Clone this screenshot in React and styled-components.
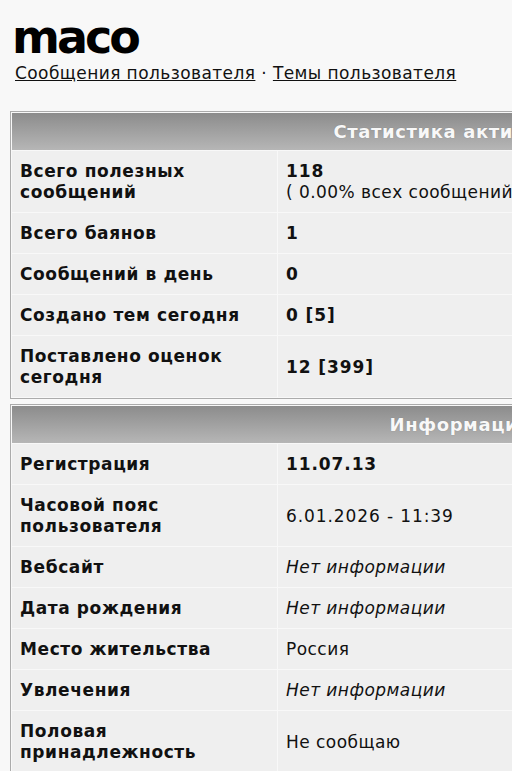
import React from "react";
import styled, { createGlobalStyle } from "styled-components";

const Global = createGlobalStyle`
  html, body {
    margin: 0;
    padding: 0;
    overflow: hidden;
    background: #f8f8f8;
  }
  body {
    font-family: "DejaVu Sans", Verdana, sans-serif;
    color: #111;
  }
`;

const Page = styled.div`
  width: 900px;
  padding: 14px 10px 0 10px;
`;

const Title = styled.h1`
  margin: 0 0 2px 2px;
  font-size: 46px;
  line-height: 46px;
  font-weight: bold;
  letter-spacing: -3px;
  color: #000;
`;

const Links = styled.div`
  margin: 0 0 27px 5px;
  font-size: 17px;
  line-height: 22px;
  letter-spacing: 0.42px;
  color: #111;
`;

const Link = styled.a`
  color: #111;
  text-decoration: underline;
`;

const Table = styled.table`
  width: 900px;
  table-layout: fixed;
  border-collapse: separate;
  border-spacing: 1px;
  border: 1px solid #ababab;
  background: #f8f8f8;
  margin-bottom: 5px;
`;

const HeadCell = styled.th`
  height: 37px;
  padding: 0;
  background: linear-gradient(to bottom, #8c8c8c, #b6b6b6);
  color: #f8f8f8;
  font-size: 18px;
  font-weight: bold;
  letter-spacing: 0.6px;
  text-shadow: 0 0 1px rgba(0, 0, 0, 0.25);
  text-align: center;
  vertical-align: middle;
`;

const Cell = styled.td`
  background: #efefef;
  padding: 10px 8px 9px 8px;
  font-size: 17px;
  line-height: 21px;
  vertical-align: middle;
  font-weight: ${(p) => (p.$bold ? "bold" : "normal")};
  font-style: ${(p) => (p.$italic ? "italic" : "normal")};
  letter-spacing: ${(p) => (p.$num ? "0.9px" : p.$bold ? "0.6px" : "0.45px")};
  color: #111;
`;

const Strong = styled.b`
  font-weight: bold;
  letter-spacing: 0.9px;
`;

const stats = [
  ["Всего полезных сообщений", null],
  ["Всего баянов", "1"],
  ["Сообщений в день", "0"],
  ["Создано тем сегодня", "0 [5]"],
  ["Поставлено оценок сегодня", "12 [399]"],
];

const info = [
  ["Регистрация", "11.07.13", "bold"],
  ["Часовой пояс пользователя", "6.01.2026 - 11:39", "num"],
  ["Вебсайт", "Нет информации", "italic"],
  ["Дата рождения", "Нет информации", "italic"],
  ["Место жительства", "Россия", ""],
  ["Увлечения", "Нет информации", "italic"],
  ["Половая принадлежность", "Не сообщаю", ""],
];

const Cols = () => (
  <colgroup>
    <col style={{ width: "265px" }} />
    <col />
  </colgroup>
);

export default function App() {
  return (
    <>
      <Global />
      <Page>
        <Title>maco</Title>
        <Links>
          <Link href="#">Сообщения пользователя</Link> · <Link href="#">Темы пользователя</Link>
        </Links>
        <Table>
          <Cols />
          <thead>
            <tr>
              <HeadCell colSpan={2}>Статистика активности</HeadCell>
            </tr>
          </thead>
          <tbody>
            {stats.map(([label, value]) => (
              <tr key={label}>
                <Cell $bold>{label}</Cell>
                {value === null ? (
                  <Cell>
                    <Strong>118</Strong>
                    <br />( 0.00% всех сообщений / 0.00 сообщений в день )
                  </Cell>
                ) : (
                  <Cell $bold $num>
                    {value}
                  </Cell>
                )}
              </tr>
            ))}
          </tbody>
        </Table>
        <Table>
          <Cols />
          <thead>
            <tr>
              <HeadCell colSpan={2}>Информация</HeadCell>
            </tr>
          </thead>
          <tbody>
            {info.map(([label, value, kind]) => (
              <tr key={label}>
                <Cell $bold>{label}</Cell>
                <Cell
                  $bold={kind === "bold"}
                  $num={kind === "bold" || kind === "num"}
                  $italic={kind === "italic"}
                >
                  {value}
                </Cell>
              </tr>
            ))}
          </tbody>
        </Table>
      </Page>
    </>
  );
}
